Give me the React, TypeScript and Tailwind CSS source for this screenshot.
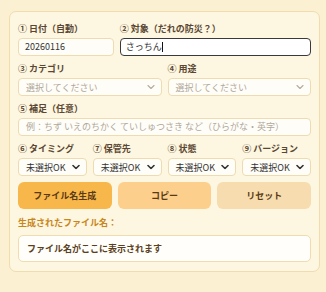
import React from "react";

const font = { fontFamily: '"Noto Sans CJK JP", "Noto Sans", sans-serif' };

function Chevron({ dark }: { dark?: boolean }) {
  return (
    <svg width="8" height="5" viewBox="0 0 8 5" className="absolute right-[6px] top-1/2 -translate-y-1/2">
      <path d="M1 1l3 3 3-3" fill="none" stroke={dark ? "#333" : "#b5ab9c"} strokeWidth={dark ? 1.6 : 1.1} strokeLinecap="round" strokeLinejoin="round" />
    </svg>
  );
}

function Label({ children }: { children: React.ReactNode }) {
  return <div className="text-[9px] leading-[13px] font-bold text-[#5a4632] mb-[3px] whitespace-nowrap">{children}</div>;
}

function Sel({ text, dark }: { text: string; dark?: boolean }) {
  return (
    <div className="relative h-[18px] rounded-[4px] border border-[#eedcb0] bg-[#fffdf8] flex items-center pl-[7px]">
      <span className={`text-[9px] leading-none ${dark ? "text-[#333]" : "text-[#b0a89a]"}`}>{text}</span>
      <Chevron dark={dark} />
    </div>
  );
}

export default function App() {
  return (
    <div className="w-[326px] h-[292px] bg-[#fcf0d3] pt-[11px] pl-[9px]" style={font}>
      <div className="w-[311px] rounded-[7px] border border-[#f0dcae] bg-[#fdf6e0] px-[8px] pt-[10px] pb-[9px] flex flex-col gap-[6px]">
        <div className="grid grid-cols-[1fr_2fr] gap-[6px]">
          <div>
            <Label>① 日付（自動）</Label>
            <div className="h-[18px] rounded-[4px] border border-[#eedcb0] bg-[#fffdf8] flex items-center pl-[6px] text-[9px] text-[#333]">20260116</div>
          </div>
          <div>
            <Label>② 対象（だれの防災？）</Label>
            <div className="h-[18px] rounded-[4px] border-[1.5px] border-[#3a3a3a] bg-white flex items-center pl-[5px] text-[9px] text-[#333]">
              さっちん<span className="inline-block w-[1px] h-[10px] bg-[#111]" />
            </div>
          </div>
        </div>
        <div className="grid grid-cols-2 gap-[6px]">
          <div>
            <Label>③ カテゴリ</Label>
            <Sel text="選択してください" />
          </div>
          <div>
            <Label>④ 用途</Label>
            <Sel text="選択してください" />
          </div>
        </div>
        <div>
          <Label>⑤ 補足（任意）</Label>
          <div className="h-[18px] rounded-[4px] border border-[#eedcb0] bg-[#fffdf8] flex items-center pl-[7px] text-[9px] text-[#b0a89a] whitespace-nowrap overflow-hidden">
            例：ちず いえのちかく ていしゅつさき など（ひらがな・英字）
          </div>
        </div>
        <div className="grid grid-cols-4 gap-[6px]">
          <div>
            <Label>⑥ タイミング</Label>
            <Sel text="未選択OK" dark />
          </div>
          <div>
            <Label>⑦ 保管先</Label>
            <Sel text="未選択OK" dark />
          </div>
          <div>
            <Label>⑧ 状態</Label>
            <Sel text="未選択OK" dark />
          </div>
          <div>
            <Label>⑨ バージョン</Label>
            <Sel text="未選択OK" dark />
          </div>
        </div>
        <div className="grid grid-cols-3 gap-[6px]">
          <button className="h-[27px] rounded-[6px] bg-[#f8b74a] text-[9px] font-bold text-[#5a3a14]">ファイル名生成</button>
          <button className="h-[27px] rounded-[6px] bg-[#fccf8c] text-[9px] font-bold text-[#5a3a14]">コピー</button>
          <button className="h-[27px] rounded-[6px] bg-[#f6dcaf] text-[9px] font-bold text-[#5a3a14]">リセット</button>
        </div>
        <div className="mt-[1px]">
          <div className="text-[9px] leading-[14px] font-bold text-[#c8861b] mb-[5px]">生成されたファイル名：</div>
          <div className="h-[27px] rounded-[5px] border border-[#f0dcae] bg-[#fffefb] flex items-center pl-[8px] text-[9px] font-bold text-[#5a4020]">
            ファイル名がここに表示されます
          </div>
        </div>
      </div>
    </div>
  );
}
